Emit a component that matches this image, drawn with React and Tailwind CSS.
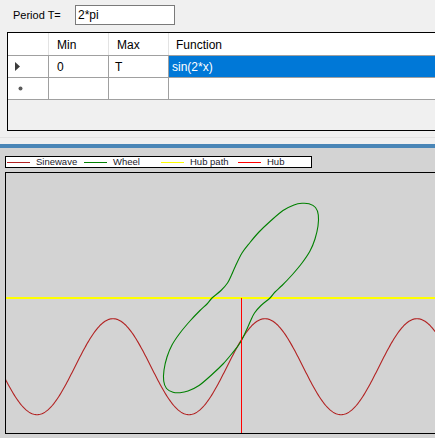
import React from "react";

// sine track: y = 366.7 - 48 sin(2π(x-227)/152), drawn in page coordinates
const sinePoints = () => {
  const pts = [];
  for (let x = 5; x <= 437; x += 1) {
    const y = 366.7 - 48 * Math.sin((2 * Math.PI * (x - 227)) / 152);
    pts.push(`${x},${y.toFixed(2)}`);
  }
  return pts.join(" ");
};

// upper half of the wheel outline, hub at (241,298); lower half is point-symmetric
const upper = [
  [212, 298], [221, 290.5], [227.5, 283], [231.5, 275], [235.5, 266], [242, 253],
  [250, 242.5], [259, 232], [270, 221.5], [283, 210.5], [294, 205], [302, 203.3],
  [309, 203.8], [315.5, 207.5], [318.3, 215], [318, 226], [315, 239], [310, 251],
  [302, 263], [292, 275], [282, 285.5], [275, 292], [270, 298],
];

const wheelPath = () => {
  const half = upper.slice(0, -1);
  const pts = half.concat(half.map(([x, y]) => [482 - x, 596 - y]));
  const n = pts.length;
  let d = `M${pts[0][0]},${pts[0][1]}`;
  for (let i = 0; i < n; i++) {
    const p0 = pts[(i - 1 + n) % n];
    const p1 = pts[i];
    const p2 = pts[(i + 1) % n];
    const p3 = pts[(i + 2) % n];
    const c1 = [p1[0] + (p2[0] - p0[0]) / 6, p1[1] + (p2[1] - p0[1]) / 6];
    const c2 = [p2[0] - (p3[0] - p1[0]) / 6, p2[1] - (p3[1] - p1[1]) / 6];
    d += ` C${c1[0].toFixed(2)},${c1[1].toFixed(2)} ${c2[0].toFixed(2)},${c2[1].toFixed(2)} ${p2[0]},${p2[1]}`;
  }
  return d + " Z";
};

function LegendItem({ color, label }) {
  return (
    <div className="flex items-center w-[77px] shrink-0">
      <div className="w-[23px] h-[1px]" style={{ backgroundColor: color }} />
      <span className="ml-[6px] text-[9.5px] leading-none text-[#1a1a2a]">{label}</span>
    </div>
  );
}

export default function App() {
  return (
    <div
      className="w-[435px] h-[438px] overflow-hidden bg-[#d3d3d3]"
      style={{ fontFamily: '"Liberation Sans", Arial, sans-serif' }}
    >
      {/* Top panel */}
      <div className="h-[144px] bg-[#f0f0f0] flex flex-col">
        <div className="flex items-center pt-[5px] pl-[13px] h-[25px]">
          <span className="w-[62px] text-[11px] text-black">Period T=</span>
          <div className="w-[100px] h-[20px] border border-[#7a7a7a] bg-white flex items-center pl-[2px] text-[12px] text-black">
            2*pi
          </div>
        </div>

        {/* Data grid */}
        <div className="mt-[7px] ml-[7px] w-[440px] h-[99px] border border-black border-r-0 bg-[#f0f0f0] flex flex-col text-[12px] text-black">
          <div className="flex h-[23px] bg-white border-b border-[#a0a0a0]">
            <div className="w-[41px] border-r border-[#e3e3e3]" />
            <div className="w-[60px] border-r border-[#e3e3e3] flex items-center pl-[8px] pt-[1px]">Min</div>
            <div className="w-[60px] border-r border-[#e3e3e3] flex items-center pl-[8px] pt-[1px]">Max</div>
            <div className="flex-1 flex items-center pl-[7px] pt-[1px]">Function</div>
          </div>
          <div className="flex h-[22px] bg-white border-b border-[#a0a0a0]">
            <div className="w-[41px] border-r border-[#a0a0a0] flex items-center pl-[7px]">
              <svg width="5" height="9" viewBox="0 0 5 9">
                <polygon points="0,0 5,4.5 0,9" fill="#3c3c3c" />
              </svg>
            </div>
            <div className="w-[60px] border-r border-[#a0a0a0] flex items-center pl-[8px]">0</div>
            <div className="w-[60px] border-r border-[#a0a0a0] flex items-center pl-[6px]">T</div>
            <div className="flex-1 flex items-center pl-[3px] bg-[#0078d7] text-white">sin(2*x)</div>
          </div>
          <div className="flex h-[22px] bg-white border-b border-[#a0a0a0]">
            <div className="w-[41px] border-r border-[#a0a0a0] flex items-center pl-[10px]">
              <svg width="5" height="5" viewBox="0 0 5 5">
                <circle cx="2.5" cy="2.5" r="2" fill="#5a5a5a" />
              </svg>
            </div>
            <div className="w-[60px] border-r border-[#a0a0a0]" />
            <div className="w-[60px] border-r border-[#a0a0a0]" />
            <div className="flex-1" />
          </div>
        </div>
        <div className="mt-[6px] h-[1px] bg-[#e3e3e3]" />
      </div>

      {/* Splitter */}
      <div className="h-[4px] bg-[#4a86b7]" />

      {/* Plot panel */}
      <div className="pt-[8px] pl-[5px]">
        <div className="w-[307px] h-[12px] border border-black bg-white flex items-center pl-[1px]">
          <LegendItem color="#b22222" label="Sinewave" />
          <LegendItem color="#008000" label="Wheel" />
          <LegendItem color="#ffff00" label="Hub path" />
          <LegendItem color="#ff0000" label="Hub" />
        </div>

        <div className="mt-[4px] w-[440px] h-[262px] border border-black border-r-0">
          <svg width="430" height="260" viewBox="6 173 430 260" className="block">
            <line x1="6" y1="298" x2="436" y2="298" stroke="#ffff00" strokeWidth="2" shapeRendering="crispEdges" />
            <polyline points={sinePoints()} fill="none" stroke="#b22222" strokeWidth="1.1" />
            <path d={wheelPath()} fill="none" stroke="#008000" strokeWidth="1.1" />
            <line x1="241.5" y1="298" x2="241.5" y2="433" stroke="#ff0000" strokeWidth="1" shapeRendering="crispEdges" />
          </svg>
        </div>
      </div>
    </div>
  );
}
